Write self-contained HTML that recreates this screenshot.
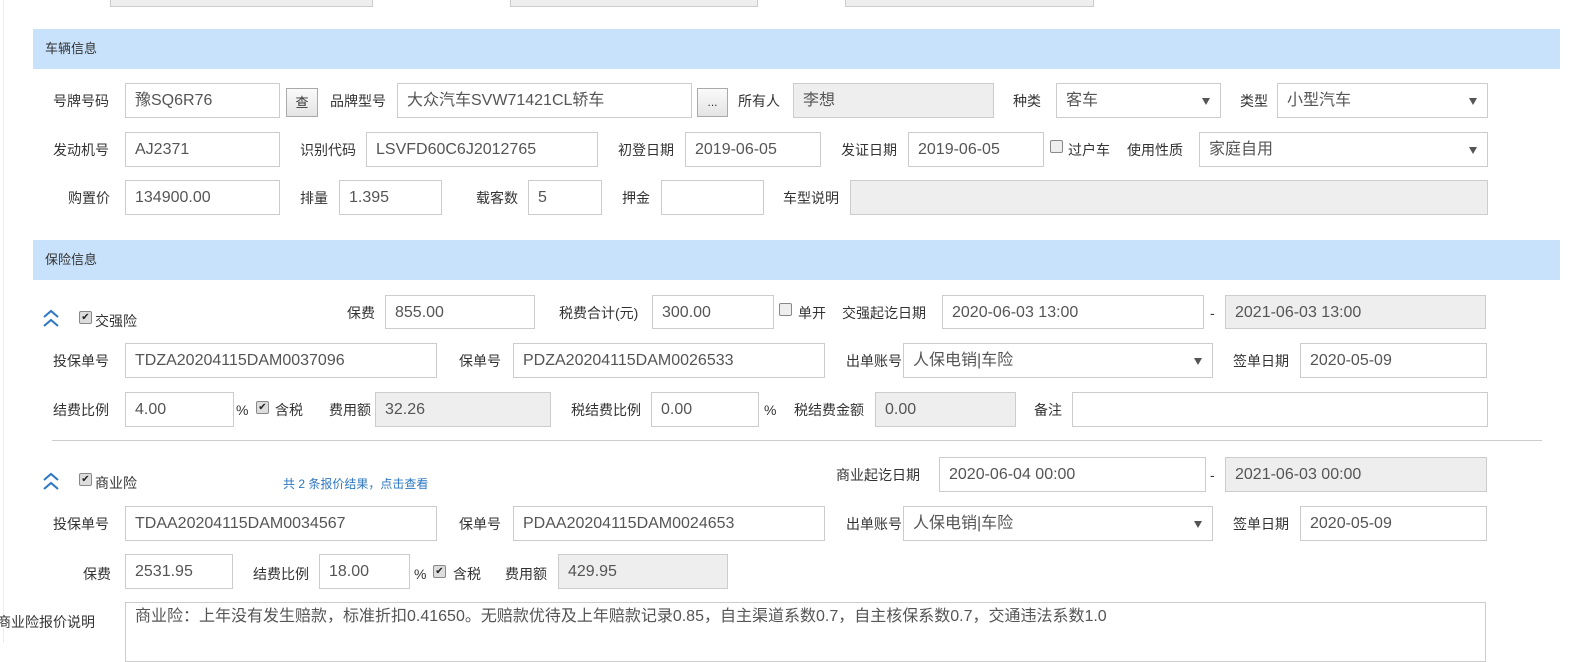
<!DOCTYPE html><html><head><meta charset="utf-8"><style>
body{margin:0;width:1573px;height:643px;overflow:hidden;background:#fff;position:relative;font-family:"Liberation Sans","Noto Sans CJK SC",sans-serif;}
.a{position:absolute;}
.l{position:absolute;font-size:14px;color:#333;line-height:16px;white-space:nowrap;}
.i{position:absolute;box-sizing:border-box;border:1px solid #ccc;background:#fff;font-size:16px;color:#555;padding-left:9px;line-height:33px;white-space:nowrap;overflow:hidden;}
.g{background:#eee;}
.s:after{content:"";position:absolute;right:10px;top:14px;border-left:4px solid transparent;border-right:4px solid transparent;border-top:7px solid #555;}
.h{position:absolute;left:33px;width:1527px;height:40px;background:#c8e2fb;font-size:13px;color:#333;line-height:40px;padding-left:12px;box-sizing:border-box;}
.cb{position:absolute;width:11px;height:11px;border:1px solid #888;border-radius:2px;background:#ddd;font-size:10px;line-height:11px;text-align:center;color:#222;}
.chev{position:absolute;}
</style></head><body>
<div class="a" style="left:3px;top:0;width:1px;height:643px;background:#e6eef7"></div>
<div class="i g" style="left:110px;top:-27px;width:263px;height:34px"></div>
<div class="i g" style="left:510px;top:-27px;width:248px;height:34px"></div>
<div class="i g" style="left:845px;top:-27px;width:249px;height:34px"></div>

<div class="h" style="top:29px">车辆信息</div>
<div class="l" style="left:53px;top:93px">号牌号码</div><div class="i" style="left:125px;top:83px;width:155px;height:35px">豫SQ6R76</div>
<div class="a" style="left:286px;top:88px;width:32px;height:29px;box-sizing:border-box;border:1px solid #aaa;background:linear-gradient(#fafafa,#e4e4e4);font-size:13px;text-align:center;line-height:27px;color:#333">查</div>
<div class="l" style="left:330px;top:93px">品牌型号</div><div class="i" style="left:397px;top:83px;width:295px;height:35px">大众汽车SVW71421CL轿车</div>
<div class="a" style="left:697px;top:88px;width:31px;height:29px;box-sizing:border-box;border:1px solid #aaa;background:linear-gradient(#fafafa,#e4e4e4);font-size:12px;text-align:center;line-height:27px;color:#333">...</div>
<div class="l" style="left:738px;top:93px">所有人</div><div class="i g" style="left:793px;top:83px;width:201px;height:35px">李想</div>
<div class="l" style="left:1013px;top:93px">种类</div><div class="i s" style="left:1056px;top:83px;width:165px;height:35px">客车</div>
<div class="l" style="left:1240px;top:93px">类型</div><div class="i s" style="left:1277px;top:83px;width:211px;height:35px">小型汽车</div>

<div class="l" style="left:53px;top:142px">发动机号</div><div class="i" style="left:125px;top:132px;width:155px;height:35px">AJ2371</div>
<div class="l" style="left:300px;top:142px">识别代码</div><div class="i" style="left:366px;top:132px;width:232px;height:35px">LSVFD60C6J2012765</div>
<div class="l" style="left:618px;top:142px">初登日期</div><div class="i" style="left:685px;top:132px;width:136px;height:35px">2019-06-05</div>
<div class="l" style="left:841px;top:142px">发证日期</div><div class="i" style="left:908px;top:132px;width:136px;height:35px">2019-06-05</div>
<div class="cb" style="left:1050px;top:140px;background:#eee"></div><div class="l" style="left:1068px;top:142px">过户车</div>
<div class="l" style="left:1127px;top:142px">使用性质</div><div class="i s" style="left:1199px;top:132px;width:289px;height:35px">家庭自用</div>

<div class="l" style="left:68px;top:190px">购置价</div><div class="i" style="left:125px;top:180px;width:155px;height:35px">134900.00</div>
<div class="l" style="left:300px;top:190px">排量</div><div class="i" style="left:339px;top:180px;width:103px;height:35px">1.395</div>
<div class="l" style="left:476px;top:190px">载客数</div><div class="i" style="left:528px;top:180px;width:74px;height:35px">5</div>
<div class="l" style="left:622px;top:190px">押金</div><div class="i" style="left:661px;top:180px;width:103px;height:35px"></div>
<div class="l" style="left:783px;top:190px">车型说明</div><div class="i g" style="left:850px;top:180px;width:638px;height:35px"></div>

<div class="h" style="top:240px">保险信息</div>

<svg class="chev" style="left:42px;top:309px" width="18" height="20" viewBox="0 0 18 20"><path d="M2 8 L9 2 L16 8 M2 17 L9 11 L16 17" fill="none" stroke="#2e77c2" stroke-width="2"/></svg>
<div class="cb" style="left:79px;top:311px">✔</div><div class="l" style="left:95px;top:313px;font-size:14px">交强险</div>
<div class="l" style="left:347px;top:305px">保费</div><div class="i" style="left:385px;top:295px;width:150px;height:34px">855.00</div>
<div class="l" style="left:559px;top:305px">税费合计(元)</div><div class="i" style="left:652px;top:295px;width:122px;height:34px">300.00</div>
<div class="cb" style="left:779px;top:303px;background:#eee"></div><div class="l" style="left:798px;top:305px">单开</div>
<div class="l" style="left:842px;top:305px">交强起讫日期</div><div class="i" style="left:942px;top:295px;width:262px;height:34px">2020-06-03 13:00</div>
<div class="l" style="left:1210px;top:305px">-</div><div class="i g" style="left:1225px;top:295px;width:261px;height:34px">2021-06-03 13:00</div>

<div class="l" style="left:53px;top:353px">投保单号</div><div class="i" style="left:125px;top:343px;width:312px;height:35px">TDZA20204115DAM0037096</div>
<div class="l" style="left:459px;top:353px">保单号</div><div class="i" style="left:513px;top:343px;width:312px;height:35px">PDZA20204115DAM0026533</div>
<div class="l" style="left:846px;top:353px">出单账号</div><div class="i s" style="left:903px;top:343px;width:310px;height:35px">人保电销|车险</div>
<div class="l" style="left:1233px;top:353px">签单日期</div><div class="i" style="left:1300px;top:343px;width:187px;height:35px">2020-05-09</div>

<div class="l" style="left:53px;top:402px">结费比例</div><div class="i" style="left:125px;top:392px;width:109px;height:35px">4.00</div>
<div class="l" style="left:236px;top:402px">%</div><div class="cb" style="left:256px;top:401px">✔</div><div class="l" style="left:275px;top:402px">含税</div>
<div class="l" style="left:329px;top:402px">费用额</div><div class="i g" style="left:375px;top:392px;width:176px;height:35px">32.26</div>
<div class="l" style="left:571px;top:402px">税结费比例</div><div class="i" style="left:651px;top:392px;width:108px;height:35px">0.00</div>
<div class="l" style="left:764px;top:402px">%</div>
<div class="l" style="left:794px;top:402px">税结费金额</div><div class="i g" style="left:875px;top:392px;width:141px;height:35px">0.00</div>
<div class="l" style="left:1034px;top:402px">备注</div><div class="i" style="left:1072px;top:392px;width:416px;height:35px"></div>

<div class="a" style="left:52px;top:440px;width:1490px;height:1px;background:#ccc"></div>

<svg class="chev" style="left:42px;top:472px" width="18" height="20" viewBox="0 0 18 20"><path d="M2 8 L9 2 L16 8 M2 17 L9 11 L16 17" fill="none" stroke="#2e77c2" stroke-width="2"/></svg>
<div class="cb" style="left:79px;top:473px">✔</div><div class="l" style="left:95px;top:475px;font-size:14px">商业险</div>
<div class="l" style="left:283px;top:476px;font-size:12px;color:#2e77c2">共 2 条报价结果，点击查看</div>
<div class="l" style="left:836px;top:467px">商业起讫日期</div><div class="i" style="left:939px;top:457px;width:267px;height:35px">2020-06-04 00:00</div>
<div class="l" style="left:1210px;top:467px">-</div><div class="i g" style="left:1225px;top:457px;width:262px;height:35px">2021-06-03 00:00</div>

<div class="l" style="left:53px;top:516px">投保单号</div><div class="i" style="left:125px;top:506px;width:312px;height:35px">TDAA20204115DAM0034567</div>
<div class="l" style="left:459px;top:516px">保单号</div><div class="i" style="left:513px;top:506px;width:312px;height:35px">PDAA20204115DAM0024653</div>
<div class="l" style="left:846px;top:516px">出单账号</div><div class="i s" style="left:903px;top:506px;width:310px;height:35px">人保电销|车险</div>
<div class="l" style="left:1233px;top:516px">签单日期</div><div class="i" style="left:1300px;top:506px;width:187px;height:35px">2020-05-09</div>

<div class="l" style="left:83px;top:566px">保费</div><div class="i" style="left:125px;top:554px;width:108px;height:35px">2531.95</div>
<div class="l" style="left:253px;top:566px">结费比例</div><div class="i" style="left:319px;top:554px;width:91px;height:35px">18.00</div>
<div class="l" style="left:414px;top:566px">%</div><div class="cb" style="left:433px;top:565px">✔</div><div class="l" style="left:453px;top:566px">含税</div>
<div class="l" style="left:505px;top:566px">费用额</div><div class="i g" style="left:558px;top:554px;width:170px;height:35px">429.95</div>

<div class="l" style="left:-3px;top:614px">商业险报价说明</div>
<div class="i" style="left:125px;top:602px;width:1361px;height:60px;line-height:28px">商业险：上年没有发生赔款，标准折扣0.41650。无赔款优待及上年赔款记录0.85，自主渠道系数0.7，自主核保系数0.7，交通违法系数1.0</div>
</body></html>
